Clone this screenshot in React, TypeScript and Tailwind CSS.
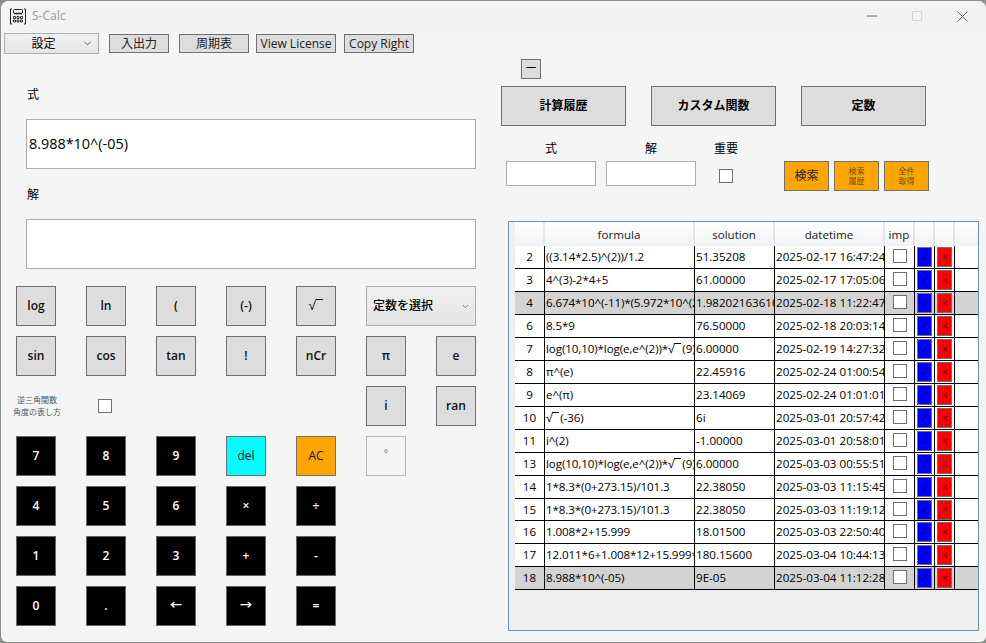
import { ChevronDown } from "lucide-react";

const FONT = "font-['Open_Sans','Noto_Sans_CJK_JP',sans-serif]";

const rows = [
  { id: "2", f: "((3.14*2.5)^(2))/1.2", s: "51.35208", d: "2025-02-17 16:47:24", h: 23 },
  { id: "3", f: "4^(3)-2*4+5", s: "61.00000", d: "2025-02-17 17:05:06", h: 23 },
  { id: "4", f: "6.674*10^(-11)*(5.972*10^(24))", s: "1.98202163610", d: "2025-02-18 11:22:47", h: 23, sel: true },
  { id: "6", f: "8.5*9", s: "76.50000", d: "2025-02-18 20:03:14", h: 23 },
  { id: "7", f: "log(10,10)*log(e,e^(2))*|(9)", s: "6.00000", d: "2025-02-19 14:27:32", h: 23 },
  { id: "8", f: "π^(e)", s: "22.45916", d: "2025-02-24 01:00:54", h: 23 },
  { id: "9", f: "e^(π)", s: "23.14069", d: "2025-02-24 01:01:01", h: 23 },
  { id: "10", f: "|(-36)", s: "6i", d: "2025-03-01 20:57:42", h: 23 },
  { id: "11", f: "i^(2)", s: "-1.00000", d: "2025-03-01 20:58:01", h: 23 },
  { id: "13", f: "log(10,10)*log(e,e^(2))*|(9)", s: "6.00000", d: "2025-03-03 00:55:51", h: 23 },
  { id: "14", f: "1*8.3*(0+273.15)/101.3", s: "22.38050", d: "2025-03-03 11:15:45", h: 23 },
  { id: "15", f: "1*8.3*(0+273.15)/101.3", s: "22.38050", d: "2025-03-03 11:19:12", h: 22 },
  { id: "16", f: "1.008*2+15.999", s: "18.01500", d: "2025-03-03 22:50:40", h: 23 },
  { id: "17", f: "12.011*6+1.008*12+15.999*6", s: "180.15600", d: "2025-03-04 10:44:13", h: 23 },
  { id: "18", f: "8.988*10^(-05)", s: "9E-05", d: "2025-03-04 11:12:28", h: 23, sel: true },
];

const keypad = ["log", "ln", "(", "(-)", "sin", "cos", "tan", "!", "nCr"];

// root sign with its bar, "|" in a formula stands for it
const Sqrt = () => (
  <span className="inline-flex items-start shrink-0">
    <span>√</span>
    <span className="block w-[7px] h-px bg-current mt-[3px] mr-px" />
  </span>
);

const Formula = ({ t }: { t: string }) => {
  const parts = t.split("|");
  return (
    <>
      <span className="shrink-0">{parts[0]}</span>
      {parts.length > 1 && <Sqrt />}
      {parts[1] && <span className="shrink-0">{parts[1]}</span>}
    </>
  );
};

const Key = ({ t, cls }: { t: React.ReactNode; cls: string }) => (
  <button className={`w-[40px] h-[40px] border-[1.5px] flex items-center justify-center text-[12px] font-semibold ${cls}`}>{t}</button>
);

const gray = "bg-[#dddddd] border-[#707070] text-[#111]";
const black = "bg-black border-[#666666] text-white";

const Check = ({ bg = "bg-white" }: { bg?: string }) => (
  <span className={`block w-[14px] h-[14px] border border-[#707070] ${bg}`} />
);

const TopBtn = ({ t, cls }: { t: string; cls: string }) => (
  <button className={`h-[19px] border-[1.5px] border-[#707070] bg-[#dddddd] text-[12px] leading-none text-[#222] ${cls}`}>{t}</button>
);

const Head = ({ t, cls }: { t: string; cls: string }) => (
  <div className={`shrink-0 h-full border-r-2 border-[#e4e7ea] flex items-center justify-center pt-px ${cls}`}>{t}</div>
);

export default function App() {
  return (
    <div className={`w-[986px] h-[643px] overflow-hidden bg-[#8a8f8c] pt-px ${FONT}`}>
      <div className="w-[985px] h-[641px] ml-px rounded-t-[8px] rounded-b-[6px] overflow-hidden bg-[#f5f5f5] text-black">
        {/* title bar */}
        <div className="h-[30px] bg-[#f3f3f3] flex items-center pl-[8px]">
          <svg width="18" height="20" viewBox="0 0 18 20" fill="none" stroke="#222" strokeWidth="1">
            <path d="M3 3H1.5V18H3M15 3H16.5V18H15" />
            <path d="M4.5 7V4.5a1 1 0 0 1 1-1h7a1 1 0 0 1 1 1V7" />
            <path d="M5 7.5H13" strokeWidth="1.4" />
            <path d="M4.5 10.5h2v2h-2zM8 10.5h2v2H8zM11.5 10.5h2v2h-2zM4.5 14h2v2h-2zM8 14h2v2H8zM11.5 14h2v2h-2z" strokeWidth="0.9" />
          </svg>
          <span className="ml-[5px] text-[12px] text-[#9a9a9a]">S-Calc</span>
          <div className="ml-auto flex items-center">
            <svg width="10" height="10" viewBox="0 0 10 10" className="mr-[35px]"><path d="M0 5H10" stroke="#666" strokeWidth="1" /></svg>
            <span className="block w-[10px] h-[10px] mr-[35px] border border-[#d5d5d5] rounded-[1px]" />
            <svg width="11" height="11" viewBox="0 0 11 11" className="mr-[18px]"><path d="M.5.5l10 10M10.5.5l-10 10" stroke="#666" strokeWidth="1" /></svg>
          </div>
        </div>

        {/* menu row */}
        <div className="flex items-center mt-[2px] ml-[3px] h-[21px]">
          <div className="w-[95px] h-[21px] border border-[#acacac] bg-gradient-to-b from-[#f0f0f0] to-[#e5e5e5] flex items-center text-[12px]">
            <span className="w-[77px] text-center">設定</span>
            <ChevronDown size={11} className="text-[#555]" strokeWidth={2} />
          </div>
          <TopBtn t="入出力" cls="w-[60px] ml-[10px]" />
          <TopBtn t="周期表" cls="w-[70px] ml-[10px]" />
          <TopBtn t="View License" cls="w-[80px] ml-[7px]" />
          <TopBtn t="Copy Right" cls="w-[70px] ml-[8px]" />
        </div>

        <div className="flex mt-[5px]">
          {/* calculator */}
          <div className="w-[497px] shrink-0">
            <div className="ml-[25px] pt-[28px]">
              <div className="text-[12px] leading-[16px] pl-px">式</div>
              <div className="mt-[16px] w-[450px] h-[50px] bg-white border border-[#acacac] flex items-center pl-[2px] text-[14.4px]">8.988*10^(-05)</div>
              <div className="mt-[18px] text-[12px] leading-[16px] pl-px">解</div>
              <div className="mt-[16px] w-[450px] h-[50px] bg-white border border-[#acacac]" />
            </div>
            <div className="ml-[15px] mt-[17px] grid grid-cols-[repeat(7,40px)] auto-rows-[40px] gap-x-[30px] gap-y-[10px]">
              {keypad.slice(0, 4).map((t) => <Key key={t} t={t} cls={gray} />)}
              <Key t={<span className="font-normal text-[13px]"><Sqrt /></span>} cls={gray} />
              <div className="col-span-2 border border-[#acacac] bg-gradient-to-b from-[#f0f0f0] to-[#e5e5e5] flex items-center pl-[6px] text-[12px] font-medium">
                <span>定数を選択</span>
                <ChevronDown size={9} className="ml-auto mr-[5px] text-[#555]" strokeWidth={2} />
              </div>
              {keypad.slice(4).map((t) => <Key key={t} t={t} cls={gray} />)}
              <Key t="π" cls={gray} />
              <Key t="e" cls={gray} />

              <div className="col-span-2 flex items-center">
                <div className="w-[50px] text-[8px] leading-[12px] text-[#555] text-center -ml-[4px] whitespace-nowrap">逆三角関数<br />角度の表し方</div>
                <div className="ml-[36px]"><Check /></div>
              </div>
              <div className="col-span-3" />
              <Key t="i" cls={gray} />
              <Key t="ran" cls={gray} />

              <Key t="7" cls={black} />
              <Key t="8" cls={black} />
              <Key t="9" cls={black} />
              <Key t="del" cls="bg-[#00ffff] border-[#707070] text-[#111] !font-medium" />
              <Key t="AC" cls="bg-[#ffa500] border-[#707070] text-[#111] !font-medium" />
              <button className="w-[40px] h-[40px] border-[1.5px] border-[#b4b8b8] flex items-center justify-center text-[10px] text-[#777] pb-[5px]">°</button>
              <div />

              <Key t="4" cls={black} />
              <Key t="5" cls={black} />
              <Key t="6" cls={black} />
              <Key t="×" cls={black} />
              <Key t="÷" cls={black} />
              <div className="col-span-2" />

              <Key t="1" cls={black} />
              <Key t="2" cls={black} />
              <Key t="3" cls={black} />
              <Key t="+" cls={black} />
              <Key t="-" cls={black} />
              <div className="col-span-2" />

              <Key t="0" cls={black} />
              <Key t="." cls={black} />
              <Key t="←" cls={black} />
              <Key t="→" cls={black} />
              <Key t="=" cls={black} />
            </div>
          </div>

          {/* history */}
          <div className="w-[488px]">
            <button className="ml-[23px] w-[20px] h-[20px] border-[1.5px] border-[#707070] bg-[#dddddd] flex items-center justify-center text-[12px] leading-none">ー</button>
            <div className="flex gap-[25px] ml-[3px] mt-[7px]">
              {["計算履歴", "カスタム関数", "定数"].map((t) => (
                <button key={t} className="w-[125px] h-[40px] border-[1.5px] border-[#707070] bg-[#dddddd] text-[12px] font-semibold">{t}</button>
              ))}
            </div>
            <div className="flex ml-[8px] mt-[13px]">
              <div className="w-[90px]">
                <div className="h-[22px] text-[12px] text-center leading-[20px]">式</div>
                <div className="h-[25px] bg-white border border-[#acacac]" />
              </div>
              <div className="w-[90px] ml-[10px]">
                <div className="h-[22px] text-[12px] text-center leading-[20px]">解</div>
                <div className="h-[25px] bg-white border border-[#acacac]" />
              </div>
              <div className="w-[40px] ml-[10px] flex flex-col items-center">
                <div className="h-[22px] text-[12px] leading-[20px] whitespace-nowrap">重要</div>
                <div className="mt-[8px]"><Check /></div>
              </div>
              <div className="flex gap-[5px] ml-[38px] mt-[22px]">
                <button className="w-[45px] h-[30px] border-[1.5px] border-[#707070] bg-[#ffa500] text-[12px] text-[#222]">検索</button>
                <button className="w-[45px] h-[30px] border-[1.5px] border-[#707070] bg-[#ffa500] text-[8px] leading-[10px] text-[#6b4a00]">検索<br />履歴</button>
                <button className="w-[45px] h-[30px] border-[1.5px] border-[#707070] bg-[#ffa500] text-[8px] leading-[10px] text-[#6b4a00]">全件<br />取得</button>
              </div>
            </div>

            {/* grid */}
            <div className="ml-[10px] mt-[30px] w-[471px] h-[410px] border border-[#6d8fb5] bg-[#efefef] pl-[6px] text-[11.6px] overflow-hidden">
              <div className="h-[24px] flex items-center bg-gradient-to-b from-white to-[#f1f2f4] text-[#222]">
                <Head t="" cls="w-[30px]" />
                <Head t="formula" cls="w-[150px]" />
                <Head t="solution" cls="w-[80px]" />
                <Head t="datetime" cls="w-[110px]" />
                <Head t="imp" cls="w-[30px]" />
                <Head t="" cls="w-[20px]" />
                <Head t="" cls="w-[20px]" />
              </div>
              {rows.map((r) => (
                <div
                  key={r.id}
                  className={`flex items-center border-b border-black ${r.sel ? "bg-[#d3d3d3]" : "bg-white"}`}
                  style={{ height: r.h }}
                >
                  <div className="w-[30px] shrink-0 h-full border-r border-black flex items-center justify-center">{r.id}</div>
                  <div className="w-[150px] shrink-0 h-full border-r border-black overflow-hidden whitespace-nowrap flex items-center pl-px tracking-[-0.1px]"><Formula t={r.f} /></div>
                  <div className="w-[80px] shrink-0 h-full border-r border-black overflow-hidden whitespace-nowrap flex items-center pl-px">{r.s}</div>
                  <div className="w-[110px] shrink-0 h-full border-r border-black overflow-hidden whitespace-nowrap flex items-center pl-px">{r.d}</div>
                  <div className="w-[30px] shrink-0 h-full border-r border-black flex items-center justify-center pb-[2px]"><Check /></div>
                  <div className="w-[20px] shrink-0 h-full border-r border-black flex items-center pl-[2px]">
                    <span className="w-[15px] h-[20px] bg-[#0000ff] border-[1.5px] border-[#707070] flex items-center justify-center text-[9px] text-[#00005a]">✓</span>
                  </div>
                  <div className="w-[20px] shrink-0 h-full border-r border-black flex items-center pl-[2px]">
                    <span className="w-[15px] h-[20px] bg-[#ff0000] border-[1.5px] border-[#707070] flex items-center justify-center text-[10px] text-[#400000]">×</span>
                  </div>
                </div>
              ))}
            </div>
          </div>
        </div>
      </div>
    </div>
  );
}
